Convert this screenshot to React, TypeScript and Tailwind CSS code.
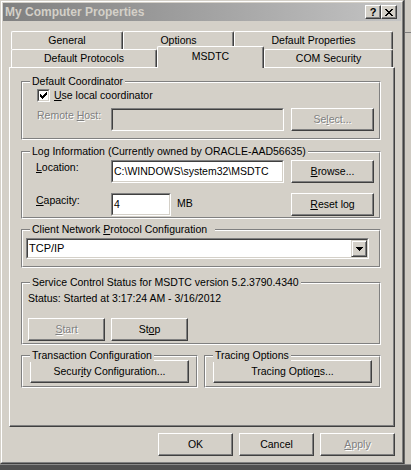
import type { ReactNode } from "react";

const FACE = "bg-[#d4d0c8]";
const DISABLED = "text-[#808080] [text-shadow:1px_1px_0_#ffffff]";

function U({ children }: { children: ReactNode }) {
  return <span className="underline underline-offset-[1px] decoration-1">{children}</span>;
}

function Btn({
  children,
  className = "",
  disabled = false,
}: {
  children: ReactNode;
  className?: string;
  disabled?: boolean;
}) {
  return (
    <div
      className={`flex items-center justify-center h-[23px] ${FACE} border border-t-white border-l-white border-r-[#404040] border-b-[#404040] shadow-[inset_-1px_-1px_0_#808080] ${
        disabled ? DISABLED : ""
      } ${className}`}
    >
      {children}
    </div>
  );
}

function Sunken({
  children,
  className = "",
  inner = "bg-white",
}: {
  children?: ReactNode;
  className?: string;
  inner?: string;
}) {
  return (
    <div className={`border border-t-[#808080] border-l-[#808080] border-r-white border-b-white ${className}`}>
      <div className={`h-full flex items-center border border-t-[#404040] border-l-[#404040] border-r-[#d4d0c8] border-b-[#d4d0c8] ${inner}`}>
        {children}
      </div>
    </div>
  );
}

function Group({
  title,
  className = "",
  titleClass = "",
  children,
}: {
  title: ReactNode;
  className?: string;
  titleClass?: string;
  children: ReactNode;
}) {
  return (
    <div className={`relative border border-t-[#808080] border-l-[#808080] border-r-white border-b-white ${className}`}>
      <div className="h-full border border-t-white border-l-white border-r-[#808080] border-b-[#808080]">
        {children}
      </div>
      <span className={`absolute left-[8px] top-[-7px] ${FACE} pl-[2px] pr-[2px] leading-[13px] ${titleClass}`}>
        {title}
      </span>
    </div>
  );
}

function Tab({ label, className = "", selected = false }: { label: string; className?: string; selected?: boolean }) {
  return (
    <div
      className={`flex items-center justify-center ${FACE} border-l border-t border-r border-l-white border-t-white border-r-[#404040] shadow-[inset_-1px_0_0_#808080] rounded-tl-[2px] rounded-tr-[2px] ${
        selected ? "relative z-10 h-[22px] -mb-[1px] pb-[2px]" : "h-[18px]"
      } ${className}`}
    >
      {label}
    </div>
  );
}

function CheckBox() {
  return (
    <Sunken className="w-[13px] h-[13px]">
      <svg width="9" height="9" viewBox="0 0 9 9" shapeRendering="crispEdges">
        <path d="M1 3h1v3H1zM2 4h1v3H2zM3 5h1v3H3zM4 4h1v3H4zM5 3h1v3H5zM6 2h1v3H6zM7 1h1v3H7z" fill="#000" />
      </svg>
    </Sunken>
  );
}

export default function App() {
  return (
    <div className="w-[411px] h-[470px] bg-[#4e4e4e] overflow-hidden flex flex-col font-['Liberation_Sans',Arial,sans-serif] text-[10.5px] leading-[13px] text-black">
      <div className="flex h-[464px]">
        {/* Window frame */}
        <div className="w-[404px] h-full border border-t-[#d4d0c8] border-l-[#d4d0c8] border-r-[#404040] border-b-[#404040]">
          <div className={`h-full ${FACE} border border-t-white border-l-white border-r-[#808080] border-b-[#808080] p-[1px] flex flex-col`}>
            {/* Title bar */}
            <div className="h-[18px] flex items-center bg-gradient-to-r from-[#808080] to-[#c4c4c4] pl-[2px] pr-[4px]">
              <span className="flex-1 font-bold text-[12px] text-[#d4d0c8]">My Computer Properties</span>
              <div className={`w-[16px] h-[14px] ${FACE} flex items-center justify-center border border-t-white border-l-white border-r-[#404040] border-b-[#404040] shadow-[inset_-1px_-1px_0_#808080] font-bold text-[11px] leading-[11px]`}>
                ?
              </div>
              <div className={`w-[16px] h-[14px] ${FACE} flex items-center justify-center border border-t-white border-l-white border-r-[#404040] border-b-[#404040] shadow-[inset_-1px_-1px_0_#808080]`}>
                <svg width="8" height="7" viewBox="0 0 8 7" shapeRendering="crispEdges">
                  <path
                    d="M0 0h2v1H0zM6 0h2v1H6zM1 1h2v1H1zM5 1h2v1H5zM2 2h4v1H2zM3 3h2v1H3zM2 4h4v1H2zM1 5h2v1H1zM5 5h2v1H5zM0 6h2v1H0zM6 6h2v1H6z"
                    fill="#000"
                  />
                </svg>
              </div>
            </div>

            {/* Content */}
            <div className="px-[6px] pt-[10px] flex flex-col">
              {/* Tabs */}
              <div className="flex ml-[2px] w-[382px]">
                <Tab label="General" className="w-[112px]" />
                <Tab label="Options" className="w-[111px]" />
                <Tab label="Default Properties" className="w-[159px]" />
              </div>
              <div className="flex items-end h-[18px] ml-[2px] w-[382px]">
                <Tab label="Default Protocols" className="w-[146px]" />
                <Tab label="MSDTC" className="w-[107px]" selected />
                <Tab label="COM Security" className="w-[129px]" />
              </div>

              {/* Panel */}
              <div className={`w-[386px] h-[360px] ${FACE} border border-t-white border-l-white border-r-[#404040] border-b-[#404040] shadow-[inset_-1px_-1px_0_#808080] pl-[11px] pt-[13px] flex flex-col`}>
                {/* Default Coordinator */}
                <Group title="Default Coordinator" className="w-[360px] h-[59px]">
                  <div className="pt-[6px] pl-[14px] flex flex-col">
                    <div className="flex items-center h-[13px]">
                      <CheckBox />
                      <span className="ml-[4px]">
                        <U>U</U>se local coordinator
                      </span>
                    </div>
                    <div className="flex items-start mt-[6px]">
                      <span className={`w-[74px] pt-[1px] ${DISABLED}`}>
                        Remote <U>H</U>ost:
                      </span>
                      <Sunken className="w-[173px] h-[23px]" inner="bg-[#d4d0c8]" />
                      <Btn className="w-[83px] ml-[7px]" disabled>
                        Se<U>l</U>ect...
                      </Btn>
                    </div>
                  </div>
                </Group>

                {/* Log Information */}
                <Group title="Log Information (Currently owned by ORACLE-AAD56635)" className="w-[360px] h-[68px] mt-[11px]">
                  <div className="pt-[7px] pl-[13px] flex flex-col">
                    <div className="flex items-start">
                      <span className="w-[75px] pt-[1px]">
                        <U>L</U>ocation:
                      </span>
                      <Sunken className="w-[173px] h-[23px]">
                        <span className="pl-[1px]">C:\WINDOWS\system32\MSDTC</span>
                      </Sunken>
                      <Btn className="w-[83px] ml-[7px]">
                        <U>B</U>rowse...
                      </Btn>
                    </div>
                    <div className="flex items-start mt-[10px]">
                      <span className="w-[75px] pt-[1px]">
                        <U>C</U>apacity:
                      </span>
                      <Sunken className="w-[60px] h-[23px]">
                        <span className="pl-[1px]">4</span>
                      </Sunken>
                      <span className="w-[113px] pl-[6px] pt-[4px]">MB</span>
                      <Btn className="w-[83px] ml-[7px]">
                        <U>R</U>eset log
                      </Btn>
                    </div>
                  </div>
                </Group>

                {/* Client Network Protocol Configuration */}
                <Group
                  title={
                    <>
                      Client Network <U>P</U>rotocol Configuration
                    </>
                  }
                  titleClass="pr-[8px]"
                  className="w-[360px] h-[39px] mt-[10px]"
                >
                  <div className="pt-[7px] pl-[3px]">
                    <Sunken className="w-[343px] h-[21px]">
                      <span className="flex-1 pl-[1px] text-[11px]">TCP/IP</span>
                      <div className={`w-[16px] h-[17px] ${FACE} flex items-center justify-center border border-t-[#d4d0c8] border-l-[#d4d0c8] border-r-[#404040] border-b-[#404040] shadow-[inset_1px_1px_0_#ffffff,inset_-1px_-1px_0_#808080]`}>
                        <svg width="7" height="4" viewBox="0 0 7 4" shapeRendering="crispEdges">
                          <path d="M0 0h7v1H0zM1 1h5v1H1zM2 2h3v1H2zM3 3h1v1H3z" fill="#000" />
                        </svg>
                      </div>
                    </Sunken>
                  </div>
                </Group>

                {/* Service Control Status */}
                <Group
                  title="Service Control Status for MSDTC version 5.2.3790.4340"
                  className="w-[360px] h-[63px] mt-[14px]"
                >
                  <div className="pt-[8px] pl-[5px] flex flex-col">
                    <span>Status: Started at 3:17:24 AM - 3/16/2012</span>
                    <div className="flex gap-[6px] mt-[13px]">
                      <Btn className="w-[77px]" disabled>
                        <U>S</U>tart
                      </Btn>
                      <Btn className="w-[77px]">
                        St<U>o</U>p
                      </Btn>
                    </div>
                  </div>
                </Group>

                {/* Transaction / Tracing */}
                <div className="flex gap-[6px] mt-[10px]">
                  <Group title="Transaction Configuration" className="w-[177px] h-[33px]">
                    <div className="pt-[3px] pl-[7px]">
                      <Btn className="w-[159px]">
                        Secur<U>i</U>ty Configuration...
                      </Btn>
                    </div>
                  </Group>
                  <Group title="Tracing Options" className="w-[177px] h-[33px]">
                    <div className="pt-[3px] pl-[7px]">
                      <Btn className="w-[159px]">
                        Tracing Optio<U>n</U>s...
                      </Btn>
                    </div>
                  </Group>
                </div>
              </div>

              {/* Dialog buttons */}
              <div className="flex justify-end gap-[6px] mt-[6px]">
                <Btn className="w-[75px]">OK</Btn>
                <Btn className="w-[75px]">Cancel</Btn>
                <Btn className="w-[75px]" disabled>
                  <U>A</U>pply
                </Btn>
              </div>
            </div>
          </div>
        </div>

        {/* Neighbouring window edge */}
        <div className="w-[7px] h-full bg-[#cfcbc3] border-l border-[#6a6a6a]">
          <div className="h-[33px] border-b border-[#808080]" />
        </div>
      </div>
      <div className="flex-1 bg-[#505050] border-t border-[#8a8a8a]" />
    </div>
  );
}
